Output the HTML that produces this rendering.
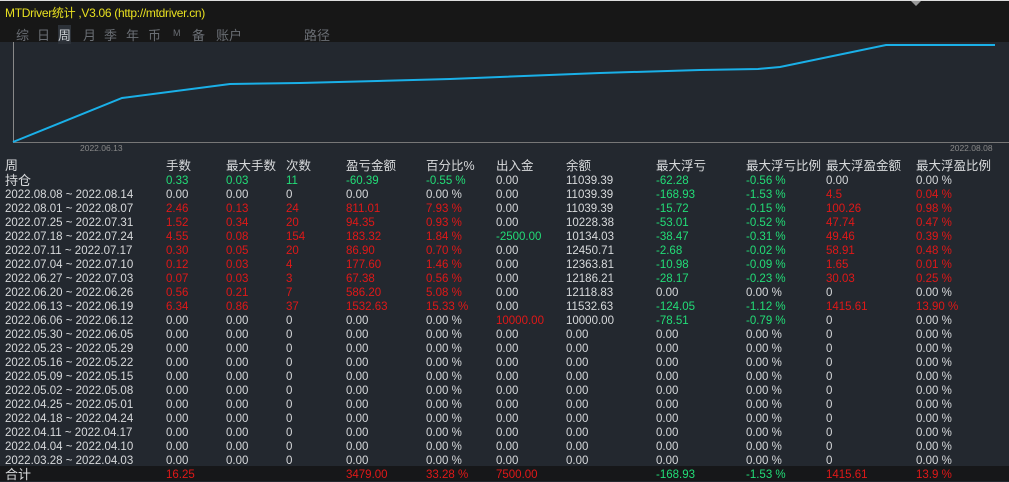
<!DOCTYPE html><html><head><meta charset="utf-8"><style>
body{margin:0;width:1009px;height:481px;overflow:hidden;background:#23282f;font-family:"Liberation Sans","Noto Sans CJK SC",sans-serif;position:relative}
.top{position:absolute;left:0;top:0;width:1009px;height:42px;background:#171717;border-top:1px solid #ddd;box-sizing:border-box}
.title{position:absolute;left:5px;top:3px;color:#e8e020;font-size:12px;letter-spacing:-0.3px}
.tabs{position:absolute;left:16px;top:24px;color:#6a6e74;font-size:13px}
.tabs span{position:absolute;top:0;white-space:nowrap}
.r{position:absolute;left:0;width:1009px;height:14px;font-size:11.5px;line-height:14px;color:#d8dadc}
.r span{position:absolute;top:0;white-space:nowrap}
.g{color:#22dd77}.d{color:#e01818}
.tot{position:absolute;left:0;top:466px;width:1009px;height:15px;background:#161719}
</style></head><body>
<div class="top"><div class="title">MTDriver统计 ,V3.06 (http://mtdriver.cn)</div>
<div class="tabs"><span style="left:0">综</span><span style="left:21px">日</span><span style="left:42px;color:#c8ccd0;background:#2c3138">周</span><span style="left:67px">月</span><span style="left:88px">季</span><span style="left:110px">年</span><span style="left:132px">币</span><span style="left:157px;font-size:9px;top:3px">M</span><span style="left:176px">备</span><span style="left:200px">账户</span><span style="left:288px">路径</span></div>
<div style="position:absolute;right:88px;top:0;width:0;height:0;border-left:5px solid transparent;border-right:5px solid transparent;border-top:5px solid #999"></div></div>
<svg style="position:absolute;left:0;top:42px" width="1009" height="115">
<line x1="13.5" y1="0" x2="13.5" y2="100" stroke="#888"/>
<line x1="13" y1="100.5" x2="1009" y2="100.5" stroke="#777"/>
<polyline fill="none" stroke="#1ab0e8" stroke-width="2" points="13,100 122,56 230,42 300,41 450,37 600,31 700,28 758,27 780,25 886,3 995,3"/>
<text x="80" y="109" fill="#888" font-size="8.5" font-family="Liberation Sans">2022.06.13</text>
<text x="950" y="109" fill="#888" font-size="8.5" font-family="Liberation Sans">2022.08.08</text>
</svg>
<div class="tot"></div>
<div id="t"></div>
<script>
var X=[5,166,226,286,346,426,496,566,656,746,826,916];
var rows=[
["周","手数","最大手数","次数","盈亏金额","百分比%","出入金","余额","最大浮亏","最大浮亏比例","最大浮盈金额","最大浮盈比例"],
["持仓","g0.33","g0.03","g11","g-60.39","g-0.55 %","0.00","11039.39","g-62.28","g-0.56 %","0.00","0.00 %"],
["2022.08.08 ~ 2022.08.14","0.00","0.00","0","0.00","0.00 %","0.00","11039.39","g-168.93","g-1.53 %","d4.5","d0.04 %"],
["2022.08.01 ~ 2022.08.07","d2.46","d0.13","d24","d811.01","d7.93 %","0.00","11039.39","g-15.72","g-0.15 %","d100.26","d0.98 %"],
["2022.07.25 ~ 2022.07.31","d1.52","d0.34","d20","d94.35","d0.93 %","0.00","10228.38","g-53.01","g-0.52 %","d47.74","d0.47 %"],
["2022.07.18 ~ 2022.07.24","d4.55","d0.08","d154","d183.32","d1.84 %","g-2500.00","10134.03","g-38.47","g-0.31 %","d49.46","d0.39 %"],
["2022.07.11 ~ 2022.07.17","d0.30","d0.05","d20","d86.90","d0.70 %","0.00","12450.71","g-2.68","g-0.02 %","d58.91","d0.48 %"],
["2022.07.04 ~ 2022.07.10","d0.12","d0.03","d4","d177.60","d1.46 %","0.00","12363.81","g-10.98","g-0.09 %","d1.65","d0.01 %"],
["2022.06.27 ~ 2022.07.03","d0.07","d0.03","d3","d67.38","d0.56 %","0.00","12186.21","g-28.17","g-0.23 %","d30.03","d0.25 %"],
["2022.06.20 ~ 2022.06.26","d0.56","d0.21","d7","d586.20","d5.08 %","0.00","12118.83","0.00","0.00 %","0","0.00 %"],
["2022.06.13 ~ 2022.06.19","d6.34","d0.86","d37","d1532.63","d15.33 %","0.00","11532.63","g-124.05","g-1.12 %","d1415.61","d13.90 %"],
["2022.06.06 ~ 2022.06.12","0.00","0.00","0","0.00","0.00 %","d10000.00","10000.00","g-78.51","g-0.79 %","0","0.00 %"]];
var w=["2022.05.30 ~ 2022.06.05","2022.05.23 ~ 2022.05.29","2022.05.16 ~ 2022.05.22","2022.05.09 ~ 2022.05.15","2022.05.02 ~ 2022.05.08","2022.04.25 ~ 2022.05.01","2022.04.18 ~ 2022.04.24","2022.04.11 ~ 2022.04.17","2022.04.04 ~ 2022.04.10","2022.03.28 ~ 2022.04.03"];
w.forEach(function(a){rows.push([a,"0.00","0.00","0","0.00","0.00 %","0.00","0.00","0.00","0.00 %","0","0.00 %"])});
rows.push(["合计","d16.25","","","d3479.00","d33.28 %","d7500.00","","g-168.93","g-1.53 %","d1415.61","d13.9 %"]);
var h="";
rows.forEach(function(r,i){var top;if(i==0)top=159;else top=174+(i-1)*14;
var fs=(i<2||i==rows.length-1)?"font-size:13px;":"";
h+='<div class="r" style="top:'+top+'px">';
r.forEach(function(c,j){var cl="";if(c[0]=="g"){cl="g";c=c.slice(1)}else if(c[0]=="d"){cl="d";c=c.slice(1)}
h+='<span class="'+cl+'" style="left:'+X[j]+'px;'+(j==0?fs:(i==0?"font-size:12.5px;":""))+'">'+c+'</span>'});
h+='</div>'});
document.getElementById("t").innerHTML=h;
</script>
</body></html>
